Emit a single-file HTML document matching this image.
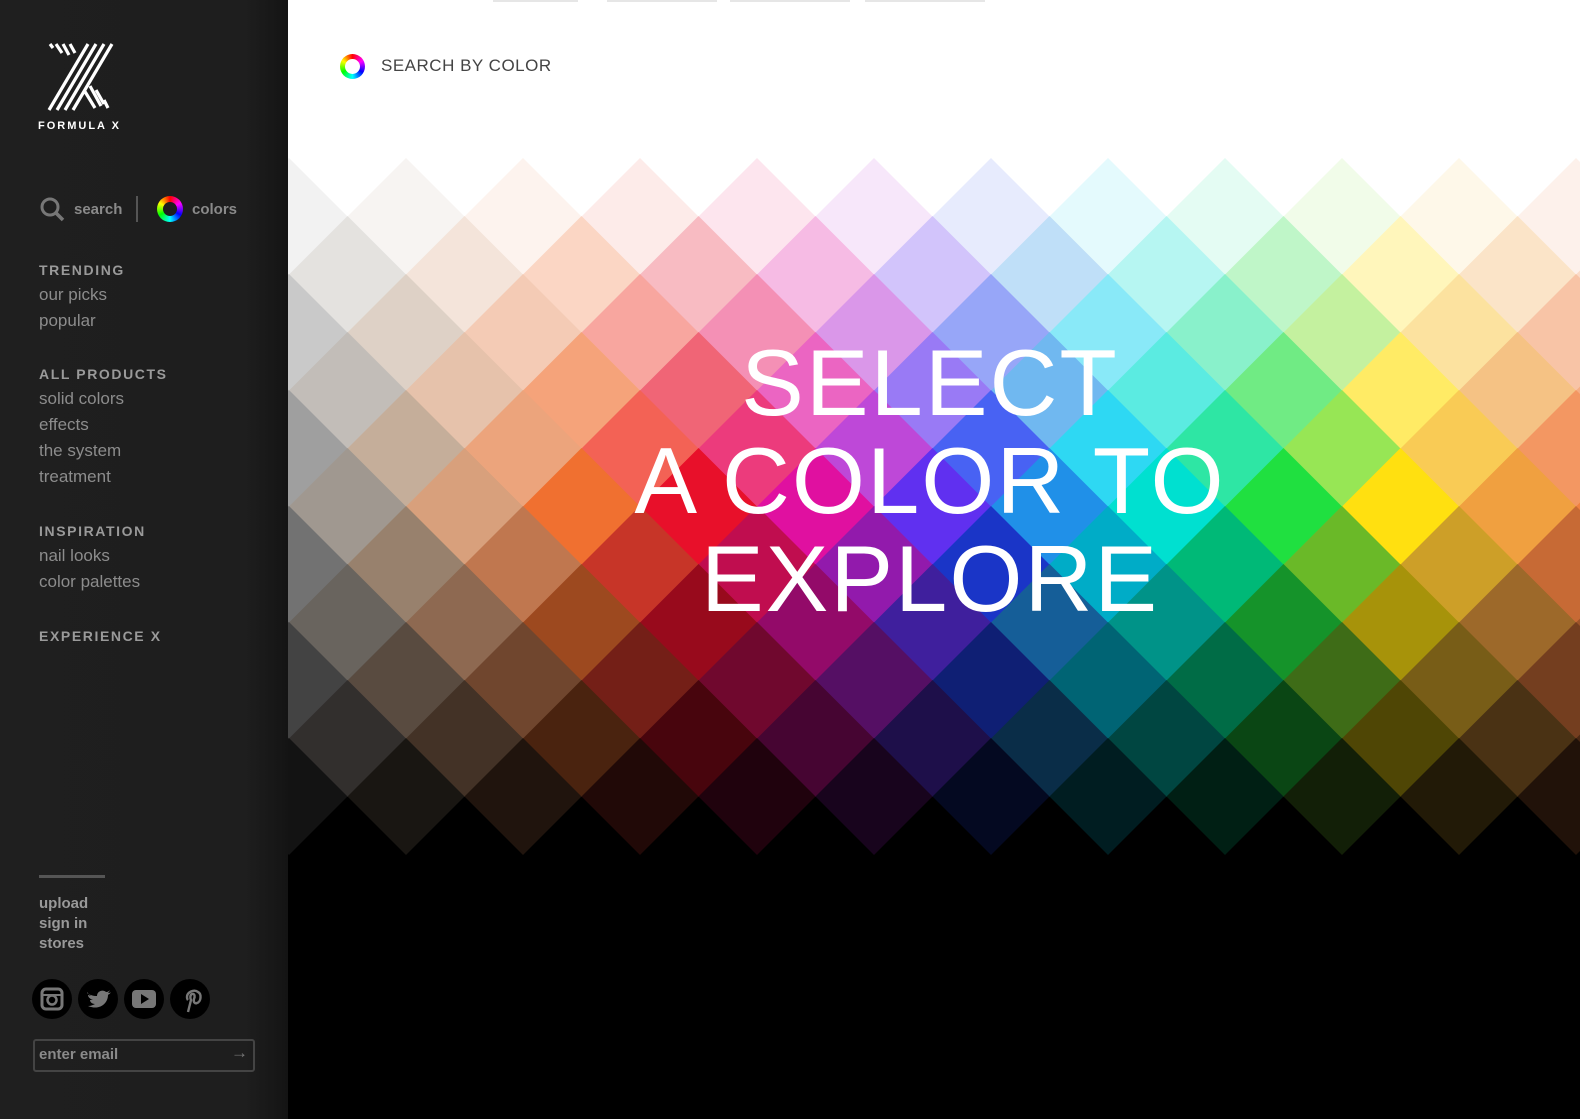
<!DOCTYPE html>
<html><head><meta charset="utf-8"><style>
*{margin:0;padding:0;box-sizing:border-box}
body{width:1580px;height:1119px;overflow:hidden;background:#fff;font-family:"Liberation Sans",sans-serif;position:relative}
#side{position:absolute;left:0;top:0;width:288px;height:1119px;background:linear-gradient(90deg,#1f1f1f 0,#1e1e1e 85%,#141414 100%)}
.t{position:absolute;left:39px;color:#8c8c8c;font-size:17px}
.h{position:absolute;left:39px;color:#9a9a9a;font-size:14px;font-weight:bold;letter-spacing:1.6px}
.s{position:absolute;left:39px;color:#999;font-size:15px;font-weight:bold}
#main{position:absolute;left:288px;top:0;width:1292px;height:1119px;overflow:hidden;background:#000}
#hero{position:absolute;left:0;top:0;width:1292px;height:1119px}
.big{position:absolute;left:0;width:1292px;text-align:center;color:#fff;font-size:94px;font-weight:normal;letter-spacing:2px;line-height:1}
</style></head><body>
<div id="side">
<svg style="position:absolute;left:44px;top:40px" width="74" height="74" viewBox="0 0 74 74">
<g stroke="#fff" stroke-width="3.2" stroke-linecap="butt">
<line x1="5" y1="70" x2="44" y2="4"/><line x1="13" y1="70" x2="52" y2="4"/><line x1="21" y1="70" x2="60" y2="4"/><line x1="29" y1="70" x2="68" y2="4"/>
<line x1="6" y1="4" x2="9" y2="8"/><line x1="12" y1="4" x2="18" y2="13"/><line x1="19" y1="4" x2="25" y2="15"/><line x1="26" y1="4" x2="31" y2="13"/>
<line x1="40" y1="50" x2="51" y2="68"/><line x1="46" y1="46" x2="57" y2="66"/><line x1="52" y1="50" x2="60" y2="64"/><line x1="60" y1="60" x2="64" y2="68"/>
</g></svg>
<div style="position:absolute;left:38px;top:120px;color:#fff;font-size:11px;font-weight:bold;letter-spacing:2px">FORMULA X</div>
<svg style="position:absolute;left:40px;top:197px" width="26" height="26" viewBox="0 0 26 26"><circle cx="10" cy="10" r="8" fill="none" stroke="#777" stroke-width="3"/><line x1="16" y1="16" x2="23" y2="23" stroke="#777" stroke-width="3.5"/></svg>
<div class="s" style="top:201px;left:74px;color:#8a8a8a">search</div>
<div style="position:absolute;left:136px;top:196px;width:2px;height:26px;background:#555"></div>
<div style="position:absolute;left:157px;top:196px;width:26px;height:26px;border-radius:50%;background:conic-gradient(#f00,#f0f,#00f,#0ff,#0f0,#ff0,#f00)"><div style="position:absolute;left:6px;top:6px;width:14px;height:14px;border-radius:50%;background:#1e1e1e"></div></div>
<div class="s" style="top:201px;left:192px;color:#8a8a8a">colors</div>
<div class="h" style="top:262px">TRENDING</div>
<div class="t" style="top:285px">our picks</div>
<div class="t" style="top:311px">popular</div>
<div class="h" style="top:366px">ALL PRODUCTS</div>
<div class="t" style="top:389px">solid colors</div>
<div class="t" style="top:415px">effects</div>
<div class="t" style="top:441px">the system</div>
<div class="t" style="top:467px">treatment</div>
<div class="h" style="top:523px">INSPIRATION</div>
<div class="t" style="top:546px">nail looks</div>
<div class="t" style="top:572px">color palettes</div>
<div class="h" style="top:628px">EXPERIENCE X</div>
<div style="position:absolute;left:39px;top:875px;width:66px;height:3px;background:#555"></div>
<div class="s" style="top:895px">upload</div>
<div class="s" style="top:915px">sign in</div>
<div class="s" style="top:935px">stores</div>
<svg style="position:absolute;left:32px;top:979px" width="180" height="42" viewBox="0 0 180 42">
<g fill="#000"><circle cx="20" cy="20" r="20"/><circle cx="66" cy="20" r="20"/><circle cx="112" cy="20" r="20"/><circle cx="158" cy="20" r="20"/></g>
<rect x="10" y="10" width="20" height="20" rx="4" fill="none" stroke="#777" stroke-width="3"/><circle cx="20" cy="21" r="4.5" fill="none" stroke="#777" stroke-width="2.5"/><line x1="11" y1="16" x2="29" y2="16" stroke="#777" stroke-width="2"/>
<path d="M55 14c3 2 6 3 10 3 0-5 6-7 9-4 2 0 3-1 4-2-1 2-1 2-2 3 1 0 2 0 3-1-1 2-2 2-3 3 0 8-8 16-20 11 3 0 5-1 7-2-3 0-5-2-5-4h3c-3-1-5-3-5-5 1 0 2 1 3 1-3-2-4-5-4-3z" fill="#777"/>
<rect x="100" y="11" width="24" height="18" rx="4" fill="#777"/><path d="M109 15l8 5-8 5z" fill="#000"/>
<path d="M156 33l3-12c-1-2-1-5 1-6 3-1 3 3 2 5-1 3 1 5 3 4 4-1 5-9 1-11-4-3-11 0-11 5 0 2 1 3 1 3" fill="none" stroke="#777" stroke-width="2.4"/>
</svg>
<div style="position:absolute;left:33px;top:1039px;width:222px;height:33px;border:2px solid #444;border-radius:3px"></div>
<div class="s" style="top:1046px;color:#8a8a8a">enter email</div>
<div style="position:absolute;left:231px;top:1043px;color:#777;font-size:17px">→</div>
</div>
<div id="main">
<svg id="hero" width="1292" height="1119" viewBox="288 0 1292 1119"><rect x="288" y="0" width="1292" height="500" fill="#fff"/><g id="g"></g></svg>
<div class="big" style="top:336px;left:-4px">SELECT</div>
<div class="big" style="top:434px;left:-4px">A COLOR TO</div>
<div class="big" style="top:532px;left:-4px">EXPLORE</div>
<div style="position:absolute;left:52px;top:54px;width:25px;height:25px;border-radius:50%;background:conic-gradient(#f00,#f0f,#00f,#0ff,#0f0,#ff0,#f00)"><div style="position:absolute;left:5px;top:5px;width:15px;height:15px;border-radius:50%;background:#fff"></div></div>
<div style="position:absolute;left:93px;top:56px;color:#444;font-size:17px;letter-spacing:.5px">SEARCH BY COLOR</div>
<div style="position:absolute;left:205px;top:0;width:85px;height:2px;background:#e6e6e6"></div>
<div style="position:absolute;left:319px;top:0;width:110px;height:2px;background:#e6e6e6"></div>
<div style="position:absolute;left:442px;top:0;width:120px;height:2px;background:#e6e6e6"></div>
<div style="position:absolute;left:577px;top:0;width:120px;height:2px;background:#e6e6e6"></div>
</div>
<script>
var base=["#8a8a8a","#a09890","#b89c84","#d8a07c","#e89060","#f07030","#f04030","#e8102a","#e81060","#e010a0","#b020d0","#6030f0","#2040f0","#2090e8","#00d0f0","#00e0d0","#00e090","#20e040","#80e030","#ffe010","#f8c030","#f0a040","#f08040"];
function hx(c){return[parseInt(c.substr(1,2),16),parseInt(c.substr(3,2),16),parseInt(c.substr(5,2),16)]}
var g=document.getElementById('g'),s='',S=58.5;
for(var j=0;j<=10;j++){for(var i=-1;i<=23;i++){if((i+j)%2)continue;var cx=289+S*i,cy=216.5+58*j;
var b=hx(base[Math.max(0,Math.min(22,i))]);var r;
if(j<5){var m=(5-j)/5.6;r=b.map(function(v){return Math.round(v+(255-v)*m)})}else{var m=(j-5)/5.8;r=b.map(function(v){return Math.round(v*(1-m))})}
s+='<path d="M'+cx+' '+(cy-S)+'L'+(cx+S)+' '+cy+'L'+cx+' '+(cy+S)+'L'+(cx-S)+' '+cy+'Z" fill="rgb('+r.join(',')+')"/>';}}
g.innerHTML=s;
</script>
</body></html>
